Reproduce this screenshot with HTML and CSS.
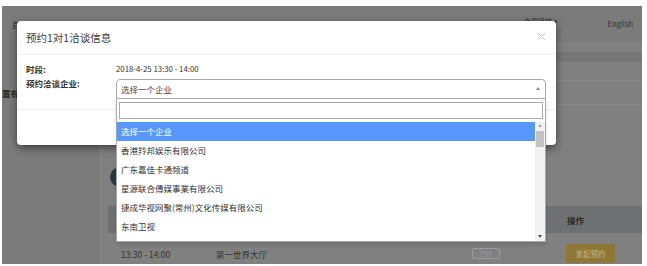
FILE: index.html
```html
<!DOCTYPE html>
<html lang="zh-CN">
<head>
<meta charset="utf-8">
<title>预约1对1洽谈信息</title>
<link rel="stylesheet" href="styles.css">
</head>
<body>
<div class="screen">
  <div class="page">
    <header class="nav">
      <div class="nav-left">首页</div>
      <div class="nav-right">
        <span class="nav-link">会展场馆 ▾</span>
        <span class="nav-lang">English</span>
      </div>
    </header>
    <div class="content">
      <aside class="sidebar">
        <div class="side-item">置有效期</div>
      </aside>
      <main class="main">
        <div class="crumb"></div>
        <div class="tabbar"></div>
        <div class="filter">
          <div class="filter-row"></div>
          <div class="filter-row tall"></div>
        </div>
        <div class="profile"><span class="avatar"></span></div>
        <div class="table">
          <div class="th"></div>
          <div class="th"></div>
          <div class="th"></div>
          <div class="th">操作</div>
          <div class="td">13:30 - 14:00</div>
          <div class="td">第一世界大厅</div>
          <div class="td"><span class="btn-outline">已约</span></div>
          <div class="td"><span class="btn-gold">发起预约</span></div>
        </div>
      </main>
    </div>
  </div>

  <div class="modal">
    <div class="modal-header">
      <span class="modal-title">预约1对1洽谈信息</span>
      <svg class="close" width="9" height="9" viewBox="0 0 9 9"><path d="M1 1L8 8M8 1L1 8" stroke="#c4c4c4" stroke-width="1" fill="none"/></svg>
    </div>
    <div class="modal-body">
      <div class="label">时段:</div>
      <div class="value">2018-4-25 13:30 - 14:00</div>
      <div class="label">预约洽谈企业:</div>
      <div class="select-wrap">
        <div class="select">
          <span>选择一个企业</span>
          <span class="caret"></span>
        </div>
        <div class="dropdown">
          <div class="search-wrap"><div class="search"></div></div>
          <div class="results">
            <ul class="list">
              <li class="option active">选择一个企业</li>
              <li class="option">香港羚邦娱乐有限公司</li>
              <li class="option">广东嘉佳卡通频道</li>
              <li class="option">星源联合傳媒事業有限公司</li>
              <li class="option">捷成华视网聚(常州)文化传媒有限公司</li>
              <li class="option">东南卫视</li>
            </ul>
            <div class="scrollbar">
              <span class="sb-up"></span>
              <span class="sb-thumb"></span>
              <span class="sb-fill"></span>
              <span class="sb-down"></span>
            </div>
          </div>
        </div>
      </div>
    </div>
    <div class="modal-footer"></div>
  </div>
</div>
</body>
</html>
```
FILE: styles.css
```css
html, body {
  margin: 0;
  padding: 0;
  background: #ffffff;
}
body {
  font-family: "Noto Sans CJK SC", "Noto Sans", sans-serif;
  color: #333;
}
.screen {
  position: relative;
  margin: 6px 5px 0 2px;
  height: 258px;
  background: #808080;
  overflow: hidden;
}
.page {
  display: flex;
  flex-direction: column;
  height: 100%;
}
.nav {
  flex: none;
  height: 36px;
  display: flex;
  justify-content: space-between;
  align-items: center;
  padding: 0 9px 0 10px;
  background: #7b7b7b;
  font-size: 8px;
  color: #2e2e2e;
}
.nav-right {
  display: flex;
  align-items: center;
  gap: 50px;
}
.nav-link {
  font-size: 7px;
  margin-top: -6px;
  color: #3a3a3a;
}
.nav-lang {
  font-size: 7.5px;
  margin-top: -2px;
  color: #333;
}
.content {
  flex: 1;
  display: flex;
  min-height: 0;
}
.sidebar {
  flex: none;
  width: 98px;
  background: #7b7b7b;
  border-right: 1px solid #878787;
}
.side-item {
  margin-top: 45px;
  line-height: 12px;
  font-size: 8.5px;
  font-weight: bold;
  color: #2b2b2b;
  white-space: nowrap;
}
.main {
  flex: 1;
  display: flex;
  flex-direction: column;
  padding-left: 7px;
  min-width: 0;
}
.main > * { flex: none; }
.crumb { height: 10px; }
.tabbar { height: 10px; background: #777777; }
.filter { display: flex; flex-direction: column; }
.filter-row { height: 18px; border-bottom: 1px solid #888; }
.filter-row.tall { height: 23px; }
.profile {
  height: 101px;
  padding: 62px 0 0 2px;
  box-sizing: border-box;
}
.avatar {
  display: block;
  width: 20px;
  height: 20px;
  border-radius: 50%;
  background: #2c3742;
}
.table {
  display: grid;
  grid-template-columns: 95px 256px 95px 1fr;
  grid-template-rows: 27px 41px;
  font-size: 8.5px;
}
.th {
  background: #6f7072;
  display: flex;
  align-items: center;
  padding-left: 13px;
  font-weight: bold;
  color: #2a2a2a;
}
.td {
  display: flex;
  align-items: center;
  padding-left: 13px;
  color: #353535;
}
.btn-outline {
  width: 28px;
  height: 11px;
  box-sizing: border-box;
  border: 1px solid #9b9b9b;
  border-radius: 2px;
  font-size: 6px;
  color: #9b9b9b;
  display: flex;
  align-items: center;
  justify-content: center;
}
.btn-gold {
  margin-left: -1px;
  width: 49px;
  height: 19px;
  background: #8e7737;
  color: #c9b786;
  font-size: 7.5px;
  display: flex;
  align-items: center;
  justify-content: center;
}

/* modal */
.modal {
  position: absolute;
  left: 15px;
  top: 15px;
  width: 539px;
  height: 124px;
  background: #fff;
  border-radius: 4px;
  box-shadow: 0 3px 9px rgba(0, 0, 0, 0.5);
  display: flex;
  flex-direction: column;
}
.modal-header {
  flex: none;
  height: 33px;
  border-bottom: 1px solid #eeeeee;
  display: flex;
  align-items: center;
  justify-content: space-between;
  padding: 0 10px 0 9px;
}
.modal-title {
  font-size: 10.5px;
  color: #3a3a3a;
}
.close { margin-top: -3px; }
.modal-body {
  display: grid;
  grid-template-columns: 90px 1fr;
  padding: 7px 10px 10px 9px;
  font-size: 8.5px;
  line-height: 14px;
}
.label {
  font-weight: bold;
  color: #333;
}
.value {
  font-size: 7.8px;
  color: #333;
}
.select-wrap {
  position: relative;
  margin-top: 3px;
}
.select {
  height: 20px;
  box-sizing: border-box;
  border: 1px solid #aaa;
  border-radius: 4px 4px 0 0;
  display: flex;
  align-items: center;
  justify-content: space-between;
  padding: 0 5px 0 4px;
  color: #444;
}
.caret {
  width: 0;
  height: 0;
  border-left: 2.5px solid transparent;
  border-right: 2.5px solid transparent;
  border-bottom: 3px solid #888;
  margin-top: -1px;
}
.modal-footer {
  flex: 1;
  border-top: 1px solid #eeeeee;
}

/* select dropdown */
.dropdown {
  position: absolute;
  top: 100%;
  left: 0;
  right: 0;
  background: #fff;
  border: 1px solid #aaa;
  border-top: none;
  box-shadow: 0 3px 4px rgba(0, 0, 0, 0.12);
  padding-top: 3px;
  z-index: 2;
}
.search-wrap {
  padding: 0 2px 3px 2px;
}
.search {
  height: 17px;
  box-sizing: border-box;
  border: 1px solid #aaa;
}
.results {
  display: grid;
  grid-template-columns: 1fr 10px;
  height: 119px;
  overflow: hidden;
}
.list {
  margin: 0;
  padding: 0;
  list-style: none;
  overflow: hidden;
}
.option {
  height: 19px;
  line-height: 19px;
  padding-left: 4px;
  font-size: 8.5px;
  color: #333;
  white-space: nowrap;
}
.option.active {
  background: #5897fb;
  color: #fff;
}
.scrollbar {
  background: #f1f1f1;
  display: flex;
  flex-direction: column;
  align-items: center;
}
.sb-up, .sb-down {
  flex: none;
  width: 0;
  height: 0;
  border-left: 2px solid transparent;
  border-right: 2px solid transparent;
}
.sb-up {
  margin-top: 2px;
  border-bottom: 3px solid #a3a3a3;
}
.sb-thumb {
  flex: none;
  margin-top: 4px;
  width: 8px;
  height: 16px;
  background: #c3c3c3;
}
.sb-fill { flex: 1; }
.sb-down {
  margin-bottom: 3px;
  border-top: 3px solid #505050;
}
```
